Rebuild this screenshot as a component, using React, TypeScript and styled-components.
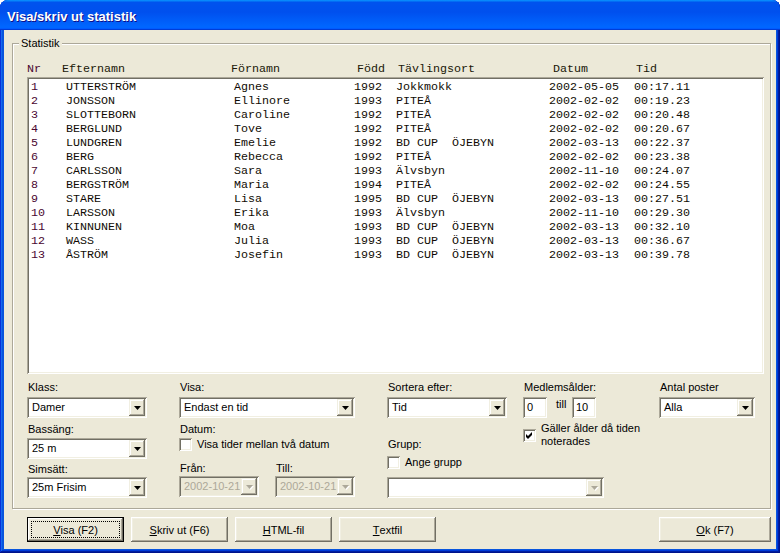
import React from 'react';
import styled, { createGlobalStyle } from 'styled-components';

// colours of the classic dialog look
const FACE = '#ece9d8';
const SHADOW = '#aca899';
const DARK = '#716f64';
const LIGHT = '#f1efe2';

const GlobalStyle = createGlobalStyle`
  html, body {
    margin: 0;
    padding: 0;
    background: #fff;
  }
  body {
    font-family: 'Liberation Sans', Arial, sans-serif;
    font-size: 11px;
    color: #000;
  }
  * {
    box-sizing: border-box;
  }
`;

type FC<P> = React.FC<P>;
type Row = [string, string, string, string, string, string, string];

const rows: Row[] = [
  ['1', 'UTTERSTRÖM', 'Agnes', '1992', 'Jokkmokk', '2002-05-05', '00:17.11'],
  ['2', 'JONSSON', 'Ellinore', '1993', 'PITEÅ', '2002-02-02', '00:19.23'],
  ['3', 'SLOTTEBORN', 'Caroline', '1992', 'PITEÅ', '2002-02-02', '00:20.48'],
  ['4', 'BERGLUND', 'Tove', '1992', 'PITEÅ', '2002-02-02', '00:20.67'],
  ['5', 'LUNDGREN', 'Emelie', '1992', 'BD CUP  ÖJEBYN', '2002-03-13', '00:22.37'],
  ['6', 'BERG', 'Rebecca', '1992', 'PITEÅ', '2002-02-02', '00:23.38'],
  ['7', 'CARLSSON', 'Sara', '1993', 'Älvsbyn', '2002-11-10', '00:24.07'],
  ['8', 'BERGSTRÖM', 'Maria', '1994', 'PITEÅ', '2002-02-02', '00:24.55'],
  ['9', 'STARE', 'Lisa', '1995', 'BD CUP  ÖJEBYN', '2002-03-13', '00:27.51'],
  ['10', 'LARSSON', 'Erika', '1993', 'Älvsbyn', '2002-11-10', '00:29.30'],
  ['11', 'KINNUNEN', 'Moa', '1993', 'BD CUP  ÖJEBYN', '2002-03-13', '00:32.10'],
  ['12', 'WASS', 'Julia', '1993', 'BD CUP  ÖJEBYN', '2002-03-13', '00:36.67'],
  ['13', 'ÅSTRÖM', 'Josefin', '1993', 'BD CUP  ÖJEBYN', '2002-03-13', '00:39.78'],
];

const headers = ['Nr', 'Efternamn', 'Förnamn', 'Född', 'Tävlingsort', 'Datum', 'Tid'];

// @ small pieces

const Arrow: FC<{ disabled?: boolean }> = ({ disabled }) => (
  <svg width="8" height="5" viewBox="0 0 8 5">
    {disabled && <polygon points="1,1 8,1 4.5,5" fill="#fff" />}
    <polygon points="0,0 7,0 3.5,4" fill={disabled ? SHADOW : '#000'} />
  </svg>
);

interface ComboProps {
  width: number;
  value?: string;
  disabled?: boolean;
  white?: boolean;
}

const Combo: FC<ComboProps> = ({ width, value = '', disabled, white }) => (
  <ComboBox $width={width} $filled={!disabled || !!white}>
    <ComboText $disabled={disabled}>{value}</ComboText>
    <DropButton>
      <Arrow disabled={disabled} />
    </DropButton>
  </ComboBox>
);

const Check: FC<{ checked?: boolean; label: React.ReactNode }> = ({ checked, label }) => (
  <CheckRow>
    <CheckBox>
      {checked && (
        <svg width="7" height="7" viewBox="0 0 7 7">
          <polygon points="0,2 2,4 6,0 6,3 2,7 0,5" fill="#000" />
        </svg>
      )}
    </CheckBox>
    <CheckLabel>{label}</CheckLabel>
  </CheckRow>
);

// @ dialog

const App: FC<{}> = () => (
  <>
    <GlobalStyle />
    <Window>
      <TitleBar>Visa/skriv ut statistik</TitleBar>
      <Client>
        <GroupBox>
          <GroupLabel>Statistik</GroupLabel>
          <HeaderRow>
            {headers.map((h, i) => (
              <Cell key={h} $nr={i === 0}>
                {h}
              </Cell>
            ))}
          </HeaderRow>
          <ListBox>
            {rows.map((r) => (
              <ListRow key={r[0]}>
                {r.map((c, i) => (
                  <Cell key={i} $nr={i === 0}>
                    {c}
                  </Cell>
                ))}
              </ListRow>
            ))}
          </ListBox>

          <Controls>
            <Column $col="1">
              <Label>Klass:</Label>
              <Combo width={120} value="Damer" />
              <Label $top={5} $bottom={2}>
                Bassäng:
              </Label>
              <Combo width={120} value="25 m" />
              <Label $top={4} $bottom={1}>
                Simsätt:
              </Label>
              <Combo width={120} value="25m Frisim" />
            </Column>

            <Column $col="3">
              <Label>Visa:</Label>
              <Combo width={176} value="Endast en tid" />
              <Label $top={5} $bottom={2}>
                Datum:
              </Label>
              <Check label="Visa tider mellan två datum" />
              <DateRow>
                <Column>
                  <Label $bottom={1}>Från:</Label>
                  <Combo width={80} value="2002-10-21" disabled />
                </Column>
                <Column>
                  <Label $bottom={1}>Till:</Label>
                  <Combo width={80} value="2002-10-21" disabled />
                </Column>
              </DateRow>
            </Column>

            <Column $col="5 / span 2">
              <Label>Sortera efter:</Label>
              <Combo width={120} value="Tid" />
              <Label $top={20} $bottom={5}>
                Grupp:
              </Label>
              <Check label="Ange grupp" />
              <Spaced $top={8}>
                <Combo width={217} disabled white />
              </Spaced>
            </Column>

            <Column $col="6">
              <Label>Medlemsålder:</Label>
              <AgeRow>
                <TextInput>0</TextInput>
                <TillText>till</TillText>
                <TextInput>10</TextInput>
              </AgeRow>
              <Spaced $top={4}>
                <Check
                  checked
                  label={
                    <>
                      Gäller ålder då tiden
                      <br />
                      noterades
                    </>
                  }
                />
              </Spaced>
            </Column>

            <Column $col="7">
              <Label>Antal poster</Label>
              <Combo width={96} value="Alla" />
            </Column>
          </Controls>
        </GroupBox>

        <ButtonBar>
          <Button $default>
            <u>V</u>isa (F2)
          </Button>
          <Button>
            <u>S</u>kriv ut (F6)
          </Button>
          <Button>
            <u>H</u>TML-fil
          </Button>
          <Button>
            <u>T</u>extfil
          </Button>
          <Button $wide>
            <u>O</u>k (F7)
          </Button>
        </ButtonBar>
      </Client>
    </Window>
  </>
);

// @ styles

const Window = styled.div`
  width: 780px;
  height: 553px;
  display: flex;
  flex-direction: column;
  border-radius: 8px 8px 0 0;
  overflow: hidden;
  background: #0855dd;
  box-shadow: inset -1px -1px #00138c, inset 1px 1px #0831d9, inset -2px -2px #001ea0, inset 2px 2px #166aee,
    inset -3px -3px #003bda, inset 3px 3px #0855dd;
`;

const TitleBar = styled.div`
  height: 30px;
  flex-shrink: 0;
  display: flex;
  align-items: center;
  padding: 2px 0 0 7px;
  color: #fff;
  font-weight: bold;
  font-size: 13px;
  text-shadow: 1px 1px #0f1089;
  background: linear-gradient(
    180deg,
    #0997ff,
    #0053ee 8%,
    #0050ee 40%,
    #06f 88%,
    #06f 93%,
    #005bff 95%,
    #003dd7 96%,
    #003dd7
  );
`;

const Client = styled.div`
  flex: 1;
  margin: 0 4px 4px;
  padding: 13px 5px 0 8px;
  background: ${FACE};
  display: flex;
  flex-direction: column;
`;

const GroupBox = styled.div`
  position: relative;
  width: 759px;
  height: 466px;
  border: 1px solid ${SHADOW};
  box-shadow: inset 1px 1px #fff, 1px 1px #fff;
  padding: 18px 5px 0 14px;
  display: flex;
  flex-direction: column;
`;

const GroupLabel = styled.span`
  position: absolute;
  top: -7px;
  left: 6px;
  padding: 0 2px;
  line-height: 13px;
  background: ${FACE};
`;

const HeaderRow = styled.div`
  display: grid;
  grid-template-columns: 35px 169px 126px 41px 155px 83px 1fr;
  height: 15px;
  font-family: 'Liberation Mono', 'Courier New', monospace;
  font-size: 11.67px;
  line-height: 14px;
  color: #201808;
`;

const ListBox = styled.div`
  width: 737px;
  height: 297px;
  background: #fff;
  padding: 3px 2px 0 4px;
  box-shadow: inset 1px 1px ${SHADOW}, inset -1px -1px #fff, inset 2px 2px ${DARK}, inset -2px -2px ${LIGHT};
  font-family: 'Liberation Mono', 'Courier New', monospace;
  font-size: 11.67px;
  color: #100c04;
`;

const ListRow = styled.div`
  display: grid;
  grid-template-columns: 35px 168px 120px 42px 153px 85px 1fr;
  height: 14px;
  line-height: 14px;
`;

const Cell = styled.span<{ $nr?: boolean }>`
  white-space: pre;
  color: ${(p) => (p.$nr ? '#4a0630' : 'inherit')};
`;

const Controls = styled.div`
  display: grid;
  grid-template-columns: 120px 32px 176px 32px 136px 136px 96px;
  margin-top: 7px;
  align-items: start;
`;

const Column = styled.div<{ $col?: string }>`
  grid-column: ${(p) => p.$col || 'auto'};
  grid-row: 1;
  display: flex;
  flex-direction: column;
  align-items: flex-start;
`;

const Label = styled.div<{ $top?: number; $bottom?: number }>`
  line-height: 13px;
  height: 13px;
  margin-top: ${(p) => p.$top || 0}px;
  margin-bottom: ${(p) => (p.$bottom === undefined ? 3 : p.$bottom)}px;
  padding-left: 1px;
  white-space: nowrap;
`;

const Spaced = styled.div<{ $top: number }>`
  margin-top: ${(p) => p.$top}px;
`;

const DateRow = styled.div`
  display: flex;
  gap: 16px;
  margin-top: 11px;
`;

const ComboBox = styled.div<{ $width: number; $filled: boolean }>`
  width: ${(p) => p.$width}px;
  height: 21px;
  flex-shrink: 0;
  display: flex;
  padding: 2px;
  background: ${(p) => (p.$filled ? '#fff' : FACE)};
  box-shadow: inset 1px 1px ${SHADOW}, inset -1px -1px #fff, inset 2px 2px ${DARK}, inset -2px -2px ${LIGHT};
`;

const ComboText = styled.span<{ $disabled?: boolean }>`
  flex: 1;
  padding-left: 3px;
  line-height: 17px;
  white-space: nowrap;
  overflow: hidden;
  color: ${(p) => (p.$disabled ? SHADOW : '#000')};
`;

const DropButton = styled.span`
  width: 16px;
  height: 17px;
  flex-shrink: 0;
  display: flex;
  align-items: center;
  justify-content: center;
  padding: 1px 0 0 1px;
  background: ${FACE};
  box-shadow: inset -1px -1px ${DARK}, inset 1px 1px ${LIGHT}, inset -2px -2px ${SHADOW}, inset 2px 2px #fff;
`;

const CheckRow = styled.label`
  display: flex;
  align-items: center;
  gap: 5px;
`;

const CheckBox = styled.span`
  width: 13px;
  height: 13px;
  flex-shrink: 0;
  display: flex;
  align-items: center;
  justify-content: center;
  background: #fff;
  box-shadow: inset 1px 1px ${SHADOW}, inset -1px -1px #fff, inset 2px 2px ${DARK}, inset -2px -2px ${LIGHT};
`;

const CheckLabel = styled.span`
  line-height: 13px;
  white-space: nowrap;
`;

const AgeRow = styled.div`
  display: flex;
  align-items: flex-start;
`;

const TextInput = styled.div`
  width: 24px;
  height: 21px;
  padding: 2px 0 0 4px;
  line-height: 17px;
  background: #fff;
  box-shadow: inset 1px 1px ${SHADOW}, inset -1px -1px #fff, inset 2px 2px ${DARK}, inset -2px -2px ${LIGHT};
`;

const TillText = styled.span`
  width: 16px;
  margin-left: 9px;
  padding-top: 1px;
  line-height: 13px;
`;

const ButtonBar = styled.div`
  display: flex;
  gap: 7px;
  margin-top: 8px;
  padding-left: 15px;
`;

const Button = styled.div<{ $default?: boolean; $wide?: boolean }>`
  position: relative;
  width: ${(p) => (p.$wide ? 112 : 97)}px;
  height: 25px;
  margin-left: ${(p) => (p.$wide ? 'auto' : '0')};
  display: flex;
  align-items: center;
  justify-content: center;
  padding-top: 1px;
  background: ${FACE};
  border: ${(p) => (p.$default ? '1px solid #000' : 'none')};
  box-shadow: inset -1px -1px ${DARK}, inset 1px 1px #fff, inset -2px -2px ${SHADOW}, inset 2px 2px ${LIGHT};
  & u {
    text-decoration: underline;
  }
  ${(p) =>
    p.$default &&
    `
      &::after {
        content: '';
        position: absolute;
        inset: 3px;
        border: 1px dotted #000;
      }
  `}
`;

export default App;
